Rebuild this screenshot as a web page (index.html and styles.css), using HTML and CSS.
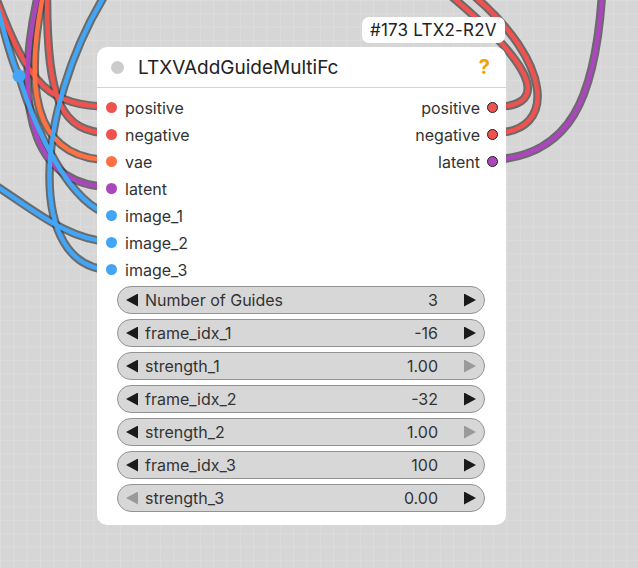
FILE: index.html
```html
<!DOCTYPE html>
<html lang="en">
<head>
  <meta charset="UTF-8">
  <title>LTXVAddGuideMultiFc</title>
  <link rel="stylesheet" href="styles.css">
</head>
<body>
  <div class="canvas">
    <!-- links going into and out of the node -->
    <svg class="wires" width="638" height="568" viewBox="0 0 638 568">
      <defs>
        <path id="in-positive" d="M -5,-5 C 30,90 50,105 111,107"/>
        <path id="in-negative" d="M 47,-5 C 47,100 60,133 111,133"/>
        <path id="in-vae" d="M 43,-5 C 20,110 45,160 111,160"/>
        <path id="in-latent" d="M 38,-5 C 10,120 40,187 111,187"/>
        <path id="in-image1" d="M -8,-10 C 5,30 10,60 19,76 C 35,130 70,205 111,215"/>
        <path id="in-image2" d="M -5,185 C 40,215 70,240 111,242"/>
        <path id="in-image3" d="M 105,-5 C 35,110 25,268 111,270"/>
        <path id="out-positive" d="M 493,107 C 545,107 545,75 450,-5"/>
        <path id="out-negative" d="M 493,133 C 560,133 550,60 473,-5"/>
        <path id="out-latent" d="M 493,160 C 570,155 595,100 602,-5"/>
      </defs>
      <g class="edge">
        <use href="#in-positive"/>
        <use href="#in-negative"/>
        <use href="#in-vae"/>
        <use href="#in-latent"/>
        <use href="#in-image1"/>
        <use href="#in-image2"/>
        <use href="#in-image3"/>
        <use href="#out-positive"/>
        <use href="#out-negative"/>
        <use href="#out-latent"/>
      </g>
      <g class="core">
        <use class="red" href="#in-positive"/>
        <use class="red" href="#in-negative"/>
        <use class="orange" href="#in-vae"/>
        <use class="purple" href="#in-latent"/>
        <use class="blue" href="#in-image1"/>
        <use class="blue" href="#in-image2"/>
        <use class="blue" href="#in-image3"/>
        <use class="red" href="#out-positive"/>
        <use class="red" href="#out-negative"/>
        <use class="purple" href="#out-latent"/>
      </g>
      <circle class="reroute" cx="19" cy="76" r="6.5"/>
    </svg>

    <div class="badge">#173 LTX2-R2V</div>

    <div class="node">
      <div class="node-title">
        <span class="status-dot"></span>
        <span class="title">LTXVAddGuideMultiFc</span>
        <span class="help">?</span>
      </div>

      <div class="slots">
        <div class="inputs">
          <div class="slot"><span class="dot red"></span>positive</div>
          <div class="slot"><span class="dot red"></span>negative</div>
          <div class="slot"><span class="dot orange"></span>vae</div>
          <div class="slot"><span class="dot purple"></span>latent</div>
          <div class="slot"><span class="dot blue"></span>image_1</div>
          <div class="slot"><span class="dot blue"></span>image_2</div>
          <div class="slot"><span class="dot blue"></span>image_3</div>
        </div>
        <div class="outputs">
          <div class="slot">positive<span class="dot red linked"></span></div>
          <div class="slot">negative<span class="dot red linked"></span></div>
          <div class="slot">latent<span class="dot purple linked"></span></div>
        </div>
      </div>

      <div class="widgets">
        <div class="widget"><span class="arrow left"></span><span class="name">Number of Guides</span><span class="value">3</span><span class="arrow right"></span></div>
        <div class="widget"><span class="arrow left"></span><span class="name">frame_idx_1</span><span class="value">-16</span><span class="arrow right"></span></div>
        <div class="widget"><span class="arrow left"></span><span class="name">strength_1</span><span class="value">1.00</span><span class="arrow right off"></span></div>
        <div class="widget"><span class="arrow left"></span><span class="name">frame_idx_2</span><span class="value">-32</span><span class="arrow right"></span></div>
        <div class="widget"><span class="arrow left"></span><span class="name">strength_2</span><span class="value">1.00</span><span class="arrow right off"></span></div>
        <div class="widget"><span class="arrow left"></span><span class="name">frame_idx_3</span><span class="value">100</span><span class="arrow right"></span></div>
        <div class="widget"><span class="arrow left off"></span><span class="name">strength_3</span><span class="value">0.00</span><span class="arrow right"></span></div>
      </div>
    </div>
  </div>
</body>
</html>
```

FILE: styles.css
```css
body {
  margin: 0;
  padding: 0;
  font-family: Inter, "Noto Sans", sans-serif;
  background: #d6d6d6;
}
.canvas {
  position: relative;
  width: 638px;
  height: 568px;
  overflow: hidden;
  background-color: #d6d6d6;
  background-image:
    linear-gradient(to right, #dcdcdc 1px, transparent 1px),
    linear-gradient(to bottom, #dcdcdc 1px, transparent 1px);
  background-size: 13.33px 13.33px;
}
.wires {
  position: absolute;
  left: 0;
  top: 0;
}
.wires use {
  fill: none;
  stroke-linecap: round;
}
.edge use {
  stroke: rgba(60, 60, 60, 0.7);
  stroke-width: 8.5;
}
.core use {
  stroke-width: 4.5;
}
.core .red { stroke: #ef5350; }
.core .orange { stroke: #ff7043; }
.core .purple { stroke: #ab47bc; }
.core .blue { stroke: #42a5f5; }
.reroute {
  fill: #42a5f5;
}

/* node title badge */
.badge {
  position: absolute;
  left: 362px;
  top: 17px;
  height: 26px;
  padding: 0 8px;
  display: flex;
  align-items: center;
  background: #fff;
  border-radius: 7px;
  font-size: 17px;
  letter-spacing: 0.2px;
  color: #222;
}

.node {
  position: absolute;
  left: 97px;
  top: 47px;
  width: 409px;
  height: 478px;
  box-sizing: border-box;
  background: #fff;
  border-radius: 10px;
  display: flex;
  flex-direction: column;
}
.node-title {
  height: 40px;
  border-bottom: 1px solid #d4d4d4;
  display: flex;
  align-items: center;
  padding: 0 16px 0 14px;
}
.status-dot {
  width: 13px;
  height: 13px;
  border-radius: 50%;
  background: #cccccc;
  margin-right: 14px;
}
.title {
  flex: 1;
  font-size: 19px;
  color: #222;
}
.help {
  font-size: 20px;
  font-weight: 700;
  color: #f5a300;
}

.slots {
  display: flex;
  justify-content: space-between;
  padding-top: 6px;
}
.slot {
  height: 27px;
  display: flex;
  align-items: center;
  font-size: 16px;
  color: #333;
}
.inputs .slot {
  padding-left: 9px;
}
.inputs .dot {
  margin-right: 8px;
}
.outputs .slot {
  justify-content: flex-end;
  padding-right: 8px;
}
.outputs .dot {
  margin-left: 7px;
}
.dot {
  width: 11px;
  height: 11px;
  border-radius: 50%;
  box-sizing: border-box;
}
.dot.linked {
  border: 1px solid #222;
}
.dot.red { background: #ef5350; }
.dot.orange { background: #ff7043; }
.dot.purple { background: #ab47bc; }
.dot.blue { background: #42a5f5; }

.widgets {
  display: flex;
  flex-direction: column;
  gap: 5px;
  margin: 3px 21px 0 20px;
}
.widget {
  height: 28px;
  box-sizing: border-box;
  border: 1px solid #939393;
  border-radius: 14px;
  background: #d7d7d7;
  display: flex;
  align-items: center;
  padding: 0 8px;
  font-size: 16px;
  color: #333;
}
.widget .name {
  flex: 1;
  margin-left: 7px;
}
.widget .value {
  margin-right: 26px;
}
.arrow {
  width: 12px;
  height: 13px;
  background: #1a1a1a;
}
.arrow.left {
  clip-path: polygon(100% 0, 0 50%, 100% 100%);
}
.arrow.right {
  clip-path: polygon(0 0, 100% 50%, 0 100%);
}
.arrow.off {
  background: #9a9a9a;
}
```
